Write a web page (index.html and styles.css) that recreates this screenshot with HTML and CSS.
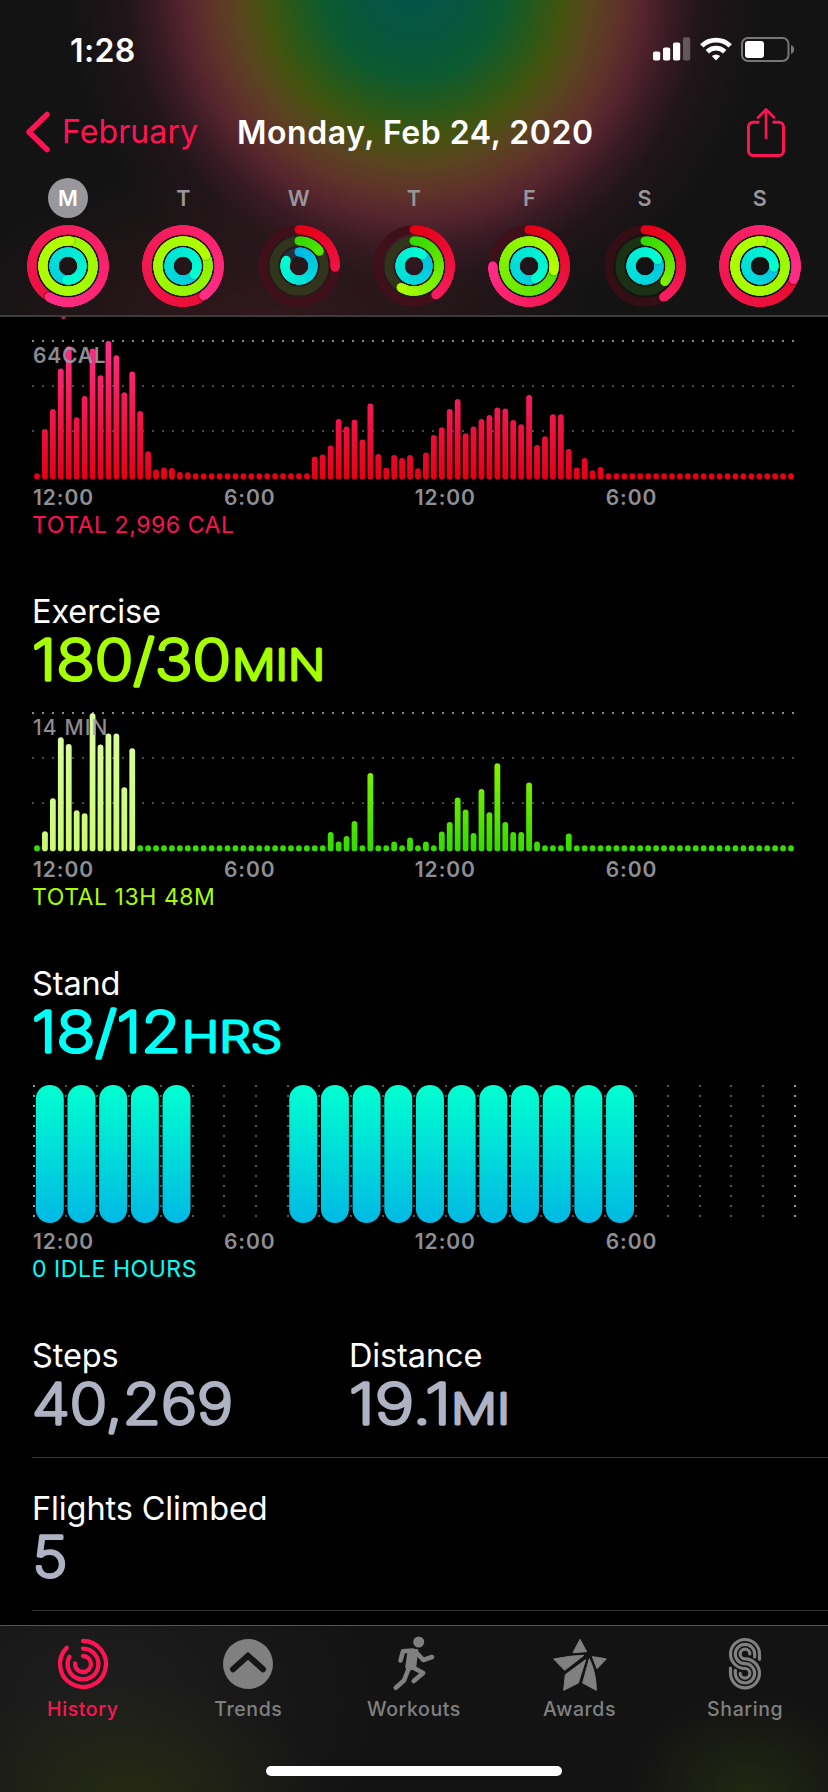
FILE: index.html
```
<!DOCTYPE html>
<html lang="en">
<head>
<meta charset="utf-8">
<title>Activity History</title>
<link rel="stylesheet" href="styles.css">
</head>
<body>
<div class="app">
  <header class="header">
    <div class="status">
      <span class="clock">1:28</span>
      <div class="status-icons">
        <svg width="38" height="24" viewBox="0 0 38 24" fill="#fff">
          <rect x="0" y="14.5" width="7.2" height="9" rx="1.8"/><rect x="10" y="10.5" width="7.2" height="13" rx="1.8"/><rect x="20" y="5.5" width="7.2" height="18" rx="1.8"/><rect x="30" y="0.3" width="7.2" height="23.2" rx="1.8" opacity=".28"/>
        </svg>
        <svg width="32" height="24" viewBox="0 0 32 24" fill="none" stroke="#fff" stroke-width="4.8">
          <path d="M1.8 8.9a20.4 20.4 0 0 1 28.4 0"/><path d="M7.3 14.7a12.4 12.4 0 0 1 17.4 0"/><path d="M16 23.5l-4.2-4.4a6 6 0 0 1 8.4 0z" fill="#fff" stroke="none"/>
        </svg>
        <svg width="54" height="25" viewBox="0 0 54 25">
          <rect x="1" y="1" width="46.5" height="23" rx="6" fill="none" stroke="#77757a" stroke-width="2"/><rect x="4" y="4" width="19" height="17" rx="3" fill="#fff"/><path d="M50 8c4.200 1.500 4.200 7.500 0 9z" fill="#77757a"/>
        </svg>
      </div>
    </div>
    <nav class="nav">
      <a class="back"><svg width="26" height="42" viewBox="0 0 26 42" fill="none" stroke="#ff1453" stroke-width="5.500" stroke-linecap="round" stroke-linejoin="round"><path d="M22 3.500L4 21l18 17.500"/></svg><span>February</span></a>
      <h1 class="title">Monday, Feb 24, 2020</h1>
      <svg class="share" width="40" height="50" viewBox="0 0 40 50" fill="none" stroke="#ff1453" stroke-width="3" stroke-linecap="round" stroke-linejoin="round"><path d="M13.500 15.300H7A4.500 4.500 0 0 0 2.500 19.800V44A4.500 4.500 0 0 0 7 48.500H33A4.500 4.500 0 0 0 37.500 44V19.800A4.500 4.500 0 0 0 33 15.300H26.500" stroke-linecap="butt"/><path d="M20 31V2.500M12 10.500l8-8 8 8" stroke-width="2.600"/></svg>
    </nav>
    <div class="week" id="week"></div>
  </header>

  <main class="content">
    <span class="peek"></span>
    <section class="block first">
      <div class="chart"><svg id="move" width="762" height="140"></svg><span class="scale">64CAL</span></div>
      <div class="axis"><span>12:00</span><span>6:00</span><span>12:00</span><span>6:00</span></div>
      <p class="total red">TOTAL 2,996 CAL</p>
    </section>
    <section class="block">
      <h2>Exercise</h2>
      <svg class="value lime" width="400" height="60"><text x="0" y="49" textLength="199" lengthAdjust="spacingAndGlyphs">180/30</text><text class="unit" x="200" y="49" textLength="93" lengthAdjust="spacingAndGlyphs">MIN</text></svg>
      <div class="chart"><svg id="exercise" width="762" height="140"></svg><span class="scale min">14 MIN</span></div>
      <div class="axis"><span>12:00</span><span>6:00</span><span>12:00</span><span>6:00</span></div>
      <p class="total lime">TOTAL 13H 48M</p>
    </section>
    <section class="block">
      <h2>Stand</h2>
      <svg class="value cyan" width="400" height="60"><text x="0" y="49" textLength="149" lengthAdjust="spacingAndGlyphs">18/12</text><text class="unit" x="150" y="49" textLength="100" lengthAdjust="spacingAndGlyphs">HRS</text></svg>
      <div class="chart"><svg id="stand" width="764" height="140"></svg></div>
      <div class="axis"><span>12:00</span><span>6:00</span><span>12:00</span><span>6:00</span></div>
      <p class="total cyan">0 IDLE HOURS</p>
    </section>
    <section class="stats">
      <div class="stat"><h2>Steps</h2><svg class="value gray" width="300" height="60"><text x="0" y="49" textLength="201" lengthAdjust="spacingAndGlyphs">40,269</text></svg></div>
      <div class="stat"><h2>Distance</h2><svg class="value gray" width="300" height="60"><text x="0" y="49" textLength="102" lengthAdjust="spacingAndGlyphs">19.1</text><text class="unit" x="102" y="49" textLength="59" lengthAdjust="spacingAndGlyphs">MI</text></svg></div>
    </section>
    <section class="stats second">
      <div class="stat"><h2>Flights Climbed</h2><svg class="value gray" width="300" height="60"><text x="0.500" y="49" textLength="35" lengthAdjust="spacingAndGlyphs">5</text></svg></div>
    </section>
  </main>

  <footer class="tabbar">
    <div class="tabs">
      <a class="tab active"><svg width="60" height="56" viewBox="-30 -28 60 56" fill="none" stroke="currentColor" stroke-width="4.300" stroke-linecap="round"><path d="M0-23A23 23 0 1 1-16.260-16.260"/><path d="M0-15.400A15.400 15.400 0 1 1-13.600-7.230"/><path d="M0-8A8 8 0 1 1-7.970-.7"/></svg><span>History</span></a>
      <a class="tab"><svg width="60" height="56" viewBox="-30 -28 60 56"><circle r="25" fill="currentColor"/><path d="M-15 5.300L0-8.300 15 5.300" fill="none" stroke="#151515" stroke-width="6" stroke-linecap="round"/></svg><span>Trends</span></a>
      <a class="tab"><svg width="60" height="56" viewBox="383 1636 60 56" fill="none" stroke="currentColor" stroke-width="4.600" stroke-linecap="round" stroke-linejoin="round"><circle cx="417.700" cy="1642" r="5.500" fill="currentColor" stroke="none"/><path d="M412 1650.500L402 1651.300 399.500 1660.500"/><path d="M408 1650.200L416 1650.200 414 1667 407 1670 405.500 1667z" fill="currentColor" stroke-width="2.500"/><path d="M415 1652L422.300 1660 431 1657"/><path d="M407.500 1669L403 1680.500 394.800 1687.800"/><path d="M411 1667L422.200 1673 412.700 1681"/></svg><span>Workouts</span></a>
      <a class="tab"><svg width="60" height="56" viewBox="420 78 180 168" fill="currentColor" stroke="currentColor" stroke-width="3" stroke-linejoin="round"><path d="M510 88L530 125 489 128z"/><path d="M431 147Q480 137 522 136L464 181z"/><path d="M527 149L505 219 461 241 466 194z"/><path d="M538 146Q559 190 559 241L518 219z"/><path d="M547 140Q568 142 589 147L561 176z"/></svg><span>Awards</span></a>
      <a class="tab"><svg width="60" height="56" viewBox="921 78 180 168" fill="none" stroke="currentColor" stroke-width="9.500" stroke-linecap="round"><path d="M1054.500 148V132A43.500 43.500 0 1 0 1011 175.500A14.500 14.500 0 1 1 996.500 190"/><path d="M1040 141V132A29 29 0 1 0 1011 161A29 29 0 1 1 982 190V181"/><path d="M1025.500 132A14.500 14.500 0 1 0 1011 146.500A43.500 43.500 0 1 1 967.500 190V174"/></svg><span>Sharing</span></a>
    </div>
    <div class="home"></div>
  </footer>
</div>
<script src="app.js"></script>
</body>
</html>
```
FILE: styles.css
```
* { box-sizing: border-box; }
body { margin: 0; background: #000; font-family: Inter, "Liberation Sans", sans-serif; color: #fff; }
h1, h2, p { margin: 0; font-weight: 400; }
svg { display: block; flex: none; }
.app { width: 828px; height: 1792px; overflow: hidden; display: flex; flex-direction: column; background: #000; }

.header {
  height: 317px; flex: none; display: flex; flex-direction: column;
  border-bottom: 2px solid #3d3c3d;
  background:
    radial-gradient(circle at 414px -12px, #04554b 0, #06563f 50px, #0c5a30 90px, #2a5818 125px, #44530f 150px, #5a4420 178px, #5f3329 205px, rgba(88,37,47,.96) 230px, rgba(66,28,40,.8) 258px, rgba(44,23,30,.5) 290px, rgba(19,19,19,0) 348px),
    radial-gradient(ellipse 330px 170px at 270px 330px, #33181d, rgba(19,19,19,0)),
    #131313;
}
.status { height: 92px; display: flex; justify-content: space-between; padding: 29px 33px 0 70px; }
.clock { font-size: 32px; font-weight: 600; line-height: 43px; letter-spacing: .4px; }
.status-icons { display: flex; gap: 9px; padding-top: 8px; }
.nav { height: 86px; display: flex; padding: 15px 42px 0 25px; align-items: flex-start; }
.back { display: flex; align-items: center; color: #ff1453; font-size: 32px; gap: 11px; margin-top: 3px; width: 211px; letter-spacing: .1px; line-height: 42px; }
.back span { padding-top: 1px; }
.title { font-size: 32px; font-weight: 600; line-height: 42px; margin-top: 5px; margin-left: 1px; letter-spacing: .55px; white-space: nowrap; }
.share { margin-left: auto; }
.week { display: grid; grid-template-columns: repeat(7, 115.300px); padding-left: 10.400px; }
.day { display: flex; flex-direction: column; align-items: center; gap: 7px; }
.day span { width: 40px; height: 40px; border-radius: 50%; line-height: 41px; text-align: center; font-size: 21.500px; font-weight: 600; color: #98969b; }
.day.selected span { background: #98979c; color: #fff; }

.content { flex: 1; padding-top: 23px; position: relative; overflow: hidden; }
.peek { position: absolute; left: 61px; top: -3px; width: 5px; height: 5px; border-radius: 50%; background: #fa114f; }
.block { padding: 53px 0 0 32px; }
.block.first { padding-top: 0; }
h2 { font-size: 32.500px; line-height: 41px; height: 40px; letter-spacing: -.12px; white-space: nowrap; }
.value { font-size: 56.500px; font-weight: 200; fill: currentColor; stroke: currentColor; stroke-width: 3.300px; stroke-linejoin: round; overflow: visible; }
.value .unit { font-size: 42.500px; stroke-width: 3.100px; }
.value + .chart { margin-top: 21px; }
.chart { position: relative; height: 140px; }
.scale { position: absolute; left: 1px; top: 3px; font-size: 21px; line-height: 26px; font-weight: 600; letter-spacing: .8px; color: rgba(160,160,166,.88); }
.scale.min { font-weight: 500; letter-spacing: 1.100px; }
.axis { display: grid; grid-template-columns: repeat(4, 190.900px); padding: 5px 0 0 1px; height: 30px; font-size: 21px; line-height: 26px; font-weight: 600; letter-spacing: .95px; color: #8e8e93; }
.total { font-size: 23px; line-height: 30px; height: 28px; letter-spacing: .55px; }
.red { color: #ff1053; }
.lime { color: #a6ff00; }
.cyan { color: #00fff6; }
.gray { color: #aeb2c2; }
.stats { margin-left: 32px; padding: 53px 0 22px; display: grid; grid-template-columns: 317px 1fr; border-bottom: 1px solid #333; }
.stats.second { padding-top: 30px; }

.tabbar {
  height: 167px; flex: none; border-top: 1px solid #555; padding-top: 10px;
  background:
    radial-gradient(ellipse 190px 120px at 130px 175px, #252a12, rgba(37,42,18,0)),
    radial-gradient(ellipse 120px 100px at 750px 170px, #222812, rgba(34,40,18,0)),
    radial-gradient(ellipse 280px 220px at 100px 80px, #1e1e1e, rgba(19,19,19,0)),
    #131313;
}
.tabs { display: grid; grid-template-columns: repeat(5, 165.600px); }
.tab { display: flex; flex-direction: column; align-items: center; color: #808080; font-size: 19.500px; font-weight: 500; letter-spacing: .6px; line-height: 26px; gap: 4px; }
.tab.active { color: #ff1453; }
.home { width: 296px; height: 10px; border-radius: 5px; background: #fff; margin: 44px auto 0; }
```
FILE: app.js
```
const f = n => n.toFixed(2);

/* ---- Activity rings ---- */
const mix = (a, b, t) => 'rgb(' + a.map((v, i) => Math.round(v + (b[i] - v) * t)).join(',') + ')';
const palette = [
  { r: 36.200, from: [226, 0, 20], to: [255, 45, 135] },
  { r: 25.100, from: [52, 218, 0], to: [178, 255, 0] },
  { r: 14, from: [0, 184, 228], to: [0, 255, 208] }
];
const warm = ['#40101a', '#30351b', '#23303c'];
const cool = ['#330f15', '#1a3213', '#12303a'];
const days = [
  ['M', [571, 2165, 546], warm],
  ['T', [505, 1145, 488], warm],
  ['W', [92, 54, 294], warm],
  ['T', [143, 211, 397], warm],
  ['F', [270, 461, 514], warm],
  ['S', [149, 128, 424], cool],
  ['S', [472, 1805, 455], cool]
];
const at = (r, deg) => {
  const a = (deg - 90) * Math.PI / 180;
  return [f(41 + r * Math.cos(a)), f(41 + r * Math.sin(a))];
};
function ring(p, total, track) {
  // Short arcs only reach part of the way through the colour ramp.
  const tint = deg => mix(p.from, p.to, deg / Math.max(total, 220));
  let s = `<circle cx="41" cy="41" r="${p.r}" fill="none" stroke="${track}" stroke-width="9"/>`;
  const dot = (deg, fill, extra = '') => {
    const [x, y] = at(p.r, deg);
    return `<circle cx="${x}" cy="${y}" r="4.500" fill="${fill}" ${extra}/>`;
  };
  if (total < 360) s += dot(0, tint(0));
  const start = Math.max(0, total - 360);
  for (let a = start; a < total; a += 4) {
    // Each slice runs under the next one so that no seam shows between them.
    const b = Math.min(total, a + 14);
    if (total > 360 && total - a <= 24 && total - a > 20) s += dot(total + 3, '#000', 'opacity=".18"');
    const [x1, y1] = at(p.r, a), [x2, y2] = at(p.r, b);
    s += `<path d="M${x1} ${y1}A${p.r} ${p.r} 0 0 1 ${x2} ${y2}" fill="none" stroke="${tint(a)}" stroke-width="9"/>`;
  }
  return s + dot(total, tint(total));
}
document.getElementById('week').innerHTML = days.map(([name, vals, tracks], i) =>
  `<div class="day${i ? '' : ' selected'}"><span>${name}</span><svg width="82" height="82">` +
  palette.map((p, k) => ring(p, vals[k], tracks[k])).join('') + '</svg></div>').join('');

/* ---- Bar charts ---- */
const fill = (n, v = 6) => Array(n).fill(v);
const move = [6, 50.3, 70.3, 110.7, 133, 62, 83.3, 130.7, 104, 138.3, 124, 87, 107.7, 68.3, 28, 9.7, 11.7, 11.3, 7.3, 7,
  ...fill(15), 22.7, 24.7, 33.7, 60.3, 52.7, 59.7, 39.7, 75.7, 25.3, 11.7, 24.3, 21.3, 24.3, 11, 26.7, 44.3, 52, 70.3, 80.3,
  46, 52.7, 60.3, 64.3, 71.7, 70.7, 59.3, 55, 84.3, 34.3, 43, 65, 65, 30.3, 11.7, 21.3, 9, 12.3, ...fill(24)];
const exercise = [6, 20, 53, 114, 107.3, 41, 38, 138, 106.7, 117.7, 117.7, 64, 103, ...fill(24), 19.3, 9.7, 15.3, 30.3, 6,
  78.3, 6, 6, 9.7, 6, 13.7, 6, 9.7, 6, 19.7, 29.3, 53.7, 41.7, 18.3, 62.3, 39, 88, 29.3, 19.3, 19.3, 68.7, 9.7, 6, 6, 6, 17.7, ...fill(28)];
const grad = (id, top, bottom) =>
  `<linearGradient id="${id}" gradientUnits="userSpaceOnUse" x1="0" y1="1" x2="0" y2="139"><stop stop-color="${top}"/><stop offset="1" stop-color="${bottom}"/></linearGradient>`;
const dots = (x1, y1, x2, y2, c) =>
  `<path d="M${f(x1)} ${y1}L${f(x2)} ${y2}" stroke="${c}" stroke-width="2" stroke-dasharray="2 8"/>`;

function bars(id, data, defs, paint) {
  let s = '<defs>' + defs + '</defs>';
  [1, 46, 91].forEach((y, i) => { s += dots(0, y, 762, y, i ? '#4a4a4c' : '#8a8a8c'); });
  data.forEach((h, i) => {
    const height = Math.max(h, 6);
    s += `<rect x="${f(5 + i * 7.937 - 2.900)}" y="${f(139.3 - height)}" width="5.800" height="${f(height)}" rx="2.900" fill="url(#${paint(i)})"/>`;
  });
  document.getElementById(id).innerHTML = s;
}
bars('move', move, grad('gm', '#ff2f8c', '#e60012'), () => 'gm');
bars('exercise', exercise, grad('ge', '#b4ff00', '#34dc00') + grad('gp', '#dcfda8', '#c9fb70'), i => i >= 1 && i <= 12 ? 'gp' : 'ge');

let st = '<defs>' + grad('gs', '#00ffd0', '#00b9e4') + '</defs>';
for (let i = 0; i <= 24; i++) {
  const x = Math.round(1 + i * 31.700) + 1;
  st += dots(x, 1, x, 135, i % 24 ? '#555557' : '#9a9a9c');
}
[0, 1, 2, 3, 4, 8, 9, 10, 11, 12, 13, 14, 15, 16, 17, 18].forEach(i => {
  st += `<rect x="${f(3.800 + i * 31.680)}" y="1" width="28" height="138" rx="14" fill="url(#gs)"/>`;
});
document.getElementById('stand').innerHTML = st;
```
